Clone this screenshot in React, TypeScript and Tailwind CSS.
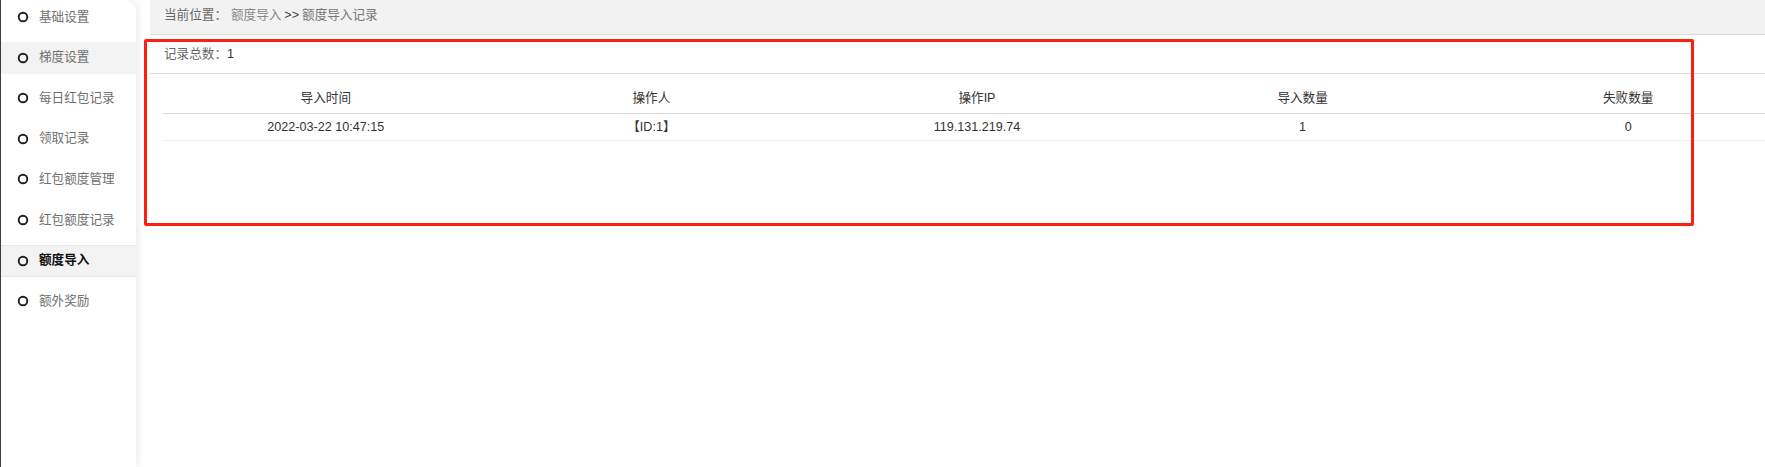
import React from "react";

const menu = [
  "基础设置",
  "梯度设置",
  "每日红包记录",
  "领取记录",
  "红包额度管理",
  "红包额度记录",
  "额度导入",
  "额外奖励",
];

const headers = ["导入时间", "操作人", "操作IP", "导入数量", "失败数量"];
const rows = [["2022-03-22 10:47:15", "【ID:1】", "119.131.219.74", "1", "0"]];

function Circle() {
  return (
    <svg width="12" height="12" viewBox="0 0 12 12" className="shrink-0">
      <circle cx="6" cy="6" r="4.3" fill="none" stroke="#1f1f1f" strokeWidth="1.9" />
    </svg>
  );
}

export default function App() {
  return (
    <div
      className="relative flex h-[467px] w-[1765px] overflow-hidden bg-white text-[12.6px]"
      style={{ fontFamily: '"Liberation Sans", "Noto Sans CJK SC", sans-serif' }}
    >
      {/* Sidebar */}
      <aside className="relative z-10 flex h-full w-[136px] shrink-0 flex-col gap-[8.6px] rounded-tr-[12px] border-l border-[#3c3c3c] bg-white pt-[1px] shadow-[3px_0_7px_rgba(0,0,0,0.07)]">
        {menu.map((m, i) => {
          const active = i === 6;
          const hover = i === 1;
          return (
            <div
              key={m}
              className={
                "flex h-[32px] items-center gap-[10px] pl-[16px] " +
                (active
                  ? "border-y border-[#e8e8e8] bg-[#f3f3f3] font-bold text-[#111]"
                  : hover
                  ? "bg-[#f3f3f3] text-[#707070]"
                  : "text-[#707070]")
              }
            >
              <Circle />
              <span>{m}</span>
            </div>
          );
        })}
      </aside>

      {/* Main */}
      <main className="ml-[14px] flex min-w-0 flex-1 flex-col overflow-hidden">
        <div className="flex h-[35px] shrink-0 items-center border-b border-[#dcdcdc] bg-[#f2f2f2] pb-[3px] pl-[14px] text-[#666]">
          <span>当前位置：</span>
          <span className="ml-[4px] text-[#888]">额度导入</span>
          <span className="ml-[3px] text-[#444]">&gt;&gt;</span>
          <span className="ml-[3px] text-[#777]">额度导入记录</span>
        </div>

        <div className="flex h-[39px] shrink-0 items-center border-b border-[#dcdcdc] pl-[14px] pt-[1px]">
          <span className="text-[#666]">记录总数：</span>
          <span className="text-[#333]">1</span>
        </div>

        <div className="pl-[13px] pt-[10px]">
          <div className="w-[1628px]">
            <div className="grid h-[30px] grid-cols-5 items-center border-b border-[#d9d9d9] text-center text-[#333]">
              {headers.map((h) => (
                <div key={h}>{h}</div>
              ))}
            </div>
            {rows.map((r, i) => (
              <div
                key={i}
                className="grid h-[27px] grid-cols-5 items-center border-b border-[#efefef] text-center text-[#333]"
              >
                {r.map((c, j) => (
                  <div key={j}>{c}</div>
                ))}
              </div>
            ))}
          </div>
        </div>
      </main>

      {/* Red annotation box */}
      <div className="pointer-events-none absolute left-[144px] top-[39px] z-20 h-[187px] w-[1550px] rounded-[2px] border-[3px] border-[#ff1e12]" />
    </div>
  );
}
